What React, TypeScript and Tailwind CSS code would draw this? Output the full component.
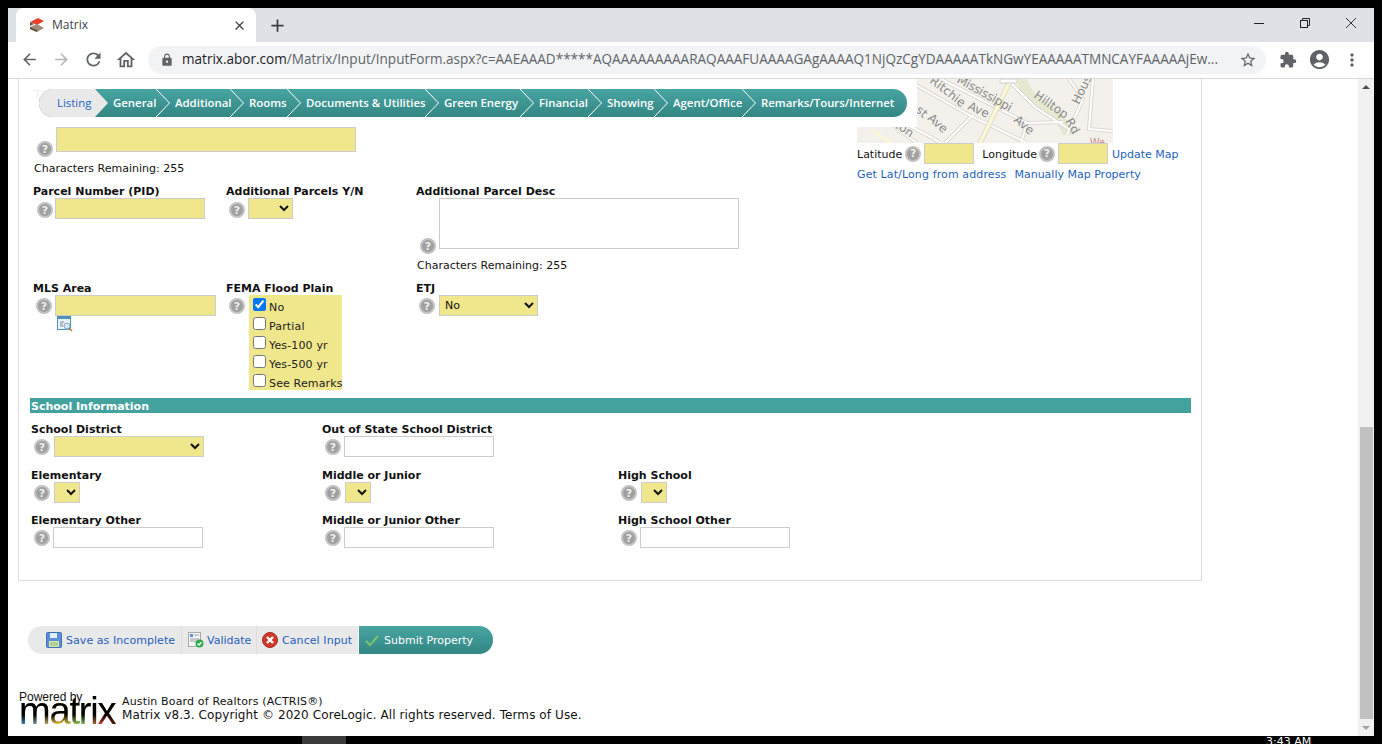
import { MdAdd, MdArrowBack, MdArrowForward, MdClose, MdExtension, MdLock, MdMoreVert, MdOutlineHome, MdRefresh, MdStarBorder, MdAccountCircle } from 'react-icons/md';
import type { ReactNode } from 'react';

const navItems = [
  { label: 'General', width: 'w-[62px]' },
  { label: 'Additional', width: 'w-[74px]' },
  { label: 'Rooms', width: 'w-[57px]' },
  { label: 'Documents & Utilities', width: 'w-[138px]' },
  { label: 'Green Energy', width: 'w-[95px]' },
  { label: 'Financial', width: 'w-[68px]' },
  { label: 'Showing', width: 'w-[66px]' },
  { label: 'Agent/Office', width: 'w-[88px]' },
];

function Help({ className = '' }: { className?: string }) {
  return (
    <span className={`flex size-4 shrink-0 items-center justify-center rounded-full border-2 border-[#c2c2c2] bg-[#a0a0a0] text-[11px] leading-none font-bold text-[#eeeeee] ${className}`}>
      ?
    </span>
  );
}

function Label({ children }: { children: ReactNode }) {
  return <div className="h-[14px] text-[11px] leading-[16px] font-bold whitespace-nowrap text-[#111]">{children}</div>;
}

function YellowSelect({ className, value = '' }: { className: string; value?: string }) {
  return (
    <select defaultValue={value} className={`h-[21px] border border-[#ccc] bg-[#f0e68c] pl-[1px] text-[11px] text-[#111] ${className}`}>
      <option value="">{''}</option>
      <option value="No">No</option>
    </select>
  );
}

function Check({ label, checked = false }: { label: string; checked?: boolean }) {
  return (
    <label className="flex h-[19px] items-center pl-[4px] whitespace-nowrap">
      <input type="checkbox" defaultChecked={checked} className="m-0 size-[13px] -translate-y-[1px] accent-[#0075ff]" />
      <span className="ml-[3px] translate-y-[3px] text-[11px] tracking-[0.15px] text-[#222]">{label}</span>
    </label>
  );
}

function MapTile() {
  return (
    <svg viewBox="0 0 256 64" className="block h-[64px] w-[256px]">
      <rect width="256" height="64" fill="#f4f1ec" />
      <path d="M170 0 C176 14 182 20 196 28 C206 34 214 44 216 56 L206 56 C200 42 190 34 176 28 C166 20 160 10 160 0 Z" fill="#e6e8d2" />
      <g fill="none" stroke="#dcd7d0" strokeWidth="4">
        <path d="M48 0 L116 38 L170 64" />
        <path d="M84 0 L170 44 L206 43" />
        <path d="M150 0 L178 28 L218 54" />
        <path d="M0 20 L70 56 L84 64" />
        <path d="M20 34 L60 64" />
        <path d="M88 64 L116 36" />
        <path d="M212 0 L226 20 L210 56" />
        <path d="M236 0 L232 50 L256 52" />
        <path d="M170 44 L164 64" />
      </g>
      <g fill="none" stroke="#fff" strokeWidth="2">
        <path d="M48 0 L116 38 L170 64" />
        <path d="M84 0 L170 44 L206 43" />
        <path d="M150 0 L178 28 L218 54" />
        <path d="M0 20 L70 56 L84 64" />
        <path d="M20 34 L60 64" />
        <path d="M88 64 L116 36" />
        <path d="M212 0 L226 20 L210 56" />
        <path d="M236 0 L232 50 L256 52" />
        <path d="M170 44 L164 64" />
      </g>
      <path d="M123 64 L153 2" stroke="#d8d3b8" strokeWidth="5" fill="none" />
      <path d="M123 64 L153 2" stroke="#faf8d8" strokeWidth="3.5" fill="none" />
      <path d="M16 52 L34 64" stroke="#faf8d8" strokeWidth="3" fill="none" />
      <rect x="143" y="0" width="17" height="4" rx="1" fill="#fff" stroke="#ccc" />
      <g fill="#8a8a8a" fontFamily="'DejaVu Sans', sans-serif" fontSize="12">
        <text transform="translate(72 3) rotate(38)">Ritchie</text>
        <text transform="translate(110 30) rotate(24)">Ave</text>
        <text transform="translate(99 3) rotate(29)" letterSpacing="-0.3">Mississippi</text>
        <text transform="translate(156 42) rotate(40)">Ave</text>
        <text transform="translate(176 18) rotate(35)">Hilltop</text>
        <text transform="translate(208 42) rotate(60)">Rd</text>
        <text transform="translate(222 26) rotate(-65)">House</text>
        <text transform="translate(58 32) rotate(42)">st</text>
        <text transform="translate(70 40) rotate(42)">Ave</text>
        <text transform="translate(32 44) rotate(35)">ston</text>
      </g>
      <text x="233" y="67" fill="#c98a8a" fontFamily="'Liberation Sans', sans-serif" fontSize="10">We</text>
    </svg>
  );
}

function Toolbar() {
  return (
    <div className="shrink-0 bg-white">
      <div className="flex h-[34px] items-end bg-[#dee1e6] pl-[8px]">
        <div className="flex h-[34px] w-[240px] items-center rounded-t-[8px] bg-white pr-[9px] pl-[13px] text-[12px] text-[#3c4043]">
          <svg viewBox="0 0 16 16" className="size-[16px] shrink-0">
            <path d="M1 5 L9 1 L15 4 L8 8 Z" fill="#e8412c" />
            <path d="M1 5 L5 7 L1 9 Z" fill="#6d5a4b" />
            <path d="M1 10 L8 7 L15 11 L8 15 L1 12 Z" fill="#a08c79" />
            <path d="M1 10 L8 13 L8 15 L1 12 Z" fill="#5c4d42" />
          </svg>
          <span className="ml-[7px] flex-1 font-['Open_Sans',sans-serif]">Matrix</span>
          <MdClose className="size-[15px] text-[#3c4043]" />
        </div>
        <MdAdd className="mb-[6px] ml-[11px] size-[21px] text-[#3c4043]" />
        <div className="ml-auto flex h-full items-start text-[#3c4043]">
          <div className="flex h-[30px] w-[46px] items-center justify-center pt-[1px]">
            <span className="h-[1px] w-[10px] bg-[#222]" />
          </div>
          <div className="flex h-[30px] w-[46px] items-center justify-center">
            <svg viewBox="0 0 10 10" className="size-[10px]" fill="none" stroke="#222">
              <rect x="0.5" y="2.5" width="7" height="7" />
              <path d="M2.5 2.5 V0.5 H9.5 V7.5 H7.5" />
            </svg>
          </div>
          <div className="flex h-[30px] w-[46px] items-center justify-center">
            <svg viewBox="0 0 10 10" className="size-[10px]" stroke="#222" strokeWidth="0.9">
              <path d="M0 0 L10 10 M10 0 L0 10" />
            </svg>
          </div>
        </div>
      </div>
      <div className="flex h-[37px] items-center border-b border-[#d9d9d9] bg-white pb-[1px] text-[#5f6368]">
        <MdArrowBack className="ml-[12px] size-[19px]" />
        <MdArrowForward className="ml-[13px] size-[19px] text-[#b5b7ba]" />
        <MdRefresh className="ml-[12px] size-[21px]" />
        <MdOutlineHome className="ml-[11px] size-[22px]" />
        <div className="ml-[11px] flex h-[28px] w-[1118px] items-center rounded-full bg-[#f1f3f4] pl-[12px] whitespace-nowrap text-[#5f6368]">
          <MdLock className="size-[14px]" />
          <span className="ml-[8px] font-['Open_Sans',sans-serif] text-[13.55px]">
            <span className="text-[#202124]">matrix.abor.com</span>/Matrix/Input/InputForm.aspx?c=AAEAAAD*****AQAAAAAAAAARAQAAAFUAAAAGAgAAAAQ1NjQzCgYDAAAAATkNGwYEAAAAATMNCAYFAAAAAjEw...
          </span>
          <MdStarBorder className="mr-[9px] ml-auto size-[18px]" />
        </div>
        <MdExtension className="ml-[13px] size-[18px]" />
        <MdAccountCircle className="ml-[11px] size-[23px]" />
        <MdMoreVert className="ml-[11px] size-[20px]" />
      </div>
    </div>
  );
}

function StepNav() {
  return (
    <div className="absolute top-0 left-0 z-10 h-[48px] w-[898px] bg-white pt-[10px] pl-[20px]">
      <span className="absolute top-[8px] left-[15px] text-[11px] text-[#eeeeee]">T</span>
      <div className="relative flex h-[28px] w-[868px] overflow-hidden rounded-full bg-linear-to-b from-[#48a5a2] to-[#338684] font-['Open_Sans',sans-serif] text-[11.4px] leading-[28px] font-semibold whitespace-nowrap text-white">
        <span className="h-[28px] w-[69px] shrink-0 bg-[#e9e9e9] pl-[18px] font-normal text-[#1e66c0] [clip-path:polygon(0_0,56px_0,69px_50%,56px_100%,0_100%)]">Listing</span>
        <div className="w-[5px] shrink-0" />
        {navItems.map(item => (
          <div key={item.label} className={`relative h-[28px] shrink-0 ${item.width}`}>
            {item.label}
            <svg viewBox="0 0 14 28" className="absolute top-0 right-[5px] h-[28px] w-[14px]" fill="none" stroke="#fff">
              <path d="M0 0 L13.5 14 L0 28" />
            </svg>
          </div>
        ))}
        <span>Remarks/Tours/Internet</span>
      </div>
    </div>
  );
}

function Panel() {
  return (
    <div className="relative ml-[10px] h-[502px] w-[1184px] border-x border-b border-[#ddd]">
      <StepNav />
      <div className="flex h-[318px]">
        <div className="w-[838px] shrink-0 pt-[48px]">
          <div className="flex pl-[18px]">
            <Help className="mt-[14px]" />
            <div className="ml-[3px] h-[25px] w-[300px] border border-[#ccc] bg-[#f0e68c]" />
          </div>
          <div className="mt-[4px] h-[14px] pl-[15px] leading-[16px]">Characters Remaining: 255</div>
          <div className="mt-[9px] flex pl-[14px]">
            <div className="w-[193px]">
              <Label>Parcel Number (PID)</Label>
              <div className="flex">
                <Help className="mt-[4px] ml-[4px]" />
                <div className="ml-[2px] h-[21px] w-[150px] border border-[#ccc] bg-[#f0e68c]" />
              </div>
            </div>
            <div className="w-[190px]">
              <Label>Additional Parcels Y/N</Label>
              <div className="flex">
                <Help className="mt-[4px] ml-[3px]" />
                <YellowSelect className="ml-[3px] w-[45px]" />
              </div>
            </div>
            <div>
              <Label>Additional Parcel Desc</Label>
              <div className="flex">
                <Help className="mt-[40px] ml-[4px]" />
                <div className="ml-[3px] h-[51px] w-[300px] border border-[#ccc] bg-white" />
              </div>
              <div className="mt-[4px] ml-[1px] h-[14px] leading-[16px]">Characters Remaining: 255</div>
            </div>
          </div>
          <div className="mt-[9px] flex pl-[14px]">
            <div className="w-[193px]">
              <Label>MLS Area</Label>
              <div className="flex">
                <Help className="mt-[3px] ml-[3px]" />
                <div className="ml-[3px]">
                  <div className="h-[21px] w-[161px] border border-[#ccc] bg-[#f0e68c]" />
                  <svg viewBox="0 0 16 16" className="ml-[2px] size-[16px]">
                    <rect x="0.5" y="0.5" width="13" height="13" fill="#eaf3f8" stroke="#4d94b8" />
                    <rect x="1" y="1" width="12" height="2" fill="#4d94b8" />
                    <path d="M3 6 H7 M3 8 H6 M3 10 H6" stroke="#7d8a92" />
                    <circle cx="10" cy="10" r="3" fill="#d5e8f4" stroke="#7fa9c4" />
                    <path d="M12 12 L15 15" stroke="#c47a3a" strokeWidth="1.5" />
                  </svg>
                </div>
              </div>
            </div>
            <div className="w-[190px]">
              <Label>FEMA Flood Plain</Label>
              <div className="flex">
                <Help className="mt-[3px] ml-[3px]" />
                <div className="ml-[4px] h-[95px] w-[93px] bg-[#f0e68c] pt-[1px]">
                  <Check label="No" checked />
                  <Check label="Partial" />
                  <Check label="Yes-100 yr" />
                  <Check label="Yes-500 yr" />
                  <Check label="See Remarks" />
                </div>
              </div>
            </div>
            <div>
              <Label>ETJ</Label>
              <div className="flex">
                <Help className="mt-[3px] ml-[3px]" />
                <YellowSelect className="ml-[4px] w-[99px]" value="No" />
              </div>
            </div>
          </div>
        </div>
        <div>
          <MapTile />
          <div className="flex h-[21px] items-center whitespace-nowrap">
            <span className="mt-[3px]">Latitude</span>
            <Help className="ml-[3px]" />
            <div className="ml-[3px] h-[21px] w-[50px] border border-[#ccc] bg-[#f0e68c]" />
            <span className="mt-[3px] ml-[8px]">Longitude</span>
            <Help className="ml-[2px]" />
            <div className="ml-[3px] h-[21px] w-[50px] border border-[#ccc] bg-[#f0e68c]" />
            <span className="mt-[3px] ml-[4px] text-[#1e5fc0]">Update Map</span>
          </div>
          <div className="mt-[4px] flex h-[14px] leading-[14px] whitespace-nowrap text-[#1e5fc0]">
            <span className="tracking-[0.12px]">Get Lat/Long from address</span>
            <span className="ml-[8px]">Manually Map Property</span>
          </div>
        </div>
      </div>
      <div className="mt-[1px] ml-[11px] h-[15px] w-[1161px] bg-[#43a19e] pl-[1px] text-[11px] leading-[17px] font-bold text-white">School Information</div>
      <div className="mt-[9px] grid grid-cols-[291px_296px_1fr] gap-y-[10px] pl-[12px]">
        <div>
          <Label>School District</Label>
          <div className="flex">
            <Help className="mt-[3px] ml-[3px]" />
            <YellowSelect className="ml-[4px] w-[150px]" />
          </div>
        </div>
        <div>
          <Label>Out of State School District</Label>
          <div className="flex">
            <Help className="mt-[3px] ml-[3px]" />
            <div className="ml-[3px] h-[21px] w-[150px] border border-[#ccc] bg-white" />
          </div>
        </div>
        <div />
        <div className="mt-[1px]">
          <Label>Elementary</Label>
          <div className="flex">
            <Help className="mt-[3px] ml-[3px]" />
            <YellowSelect className="ml-[4px] w-[26px]" />
          </div>
        </div>
        <div className="mt-[1px]">
          <Label>Middle or Junior</Label>
          <div className="flex">
            <Help className="mt-[3px] ml-[3px]" />
            <YellowSelect className="ml-[4px] w-[26px]" />
          </div>
        </div>
        <div className="mt-[1px]">
          <Label>High School</Label>
          <div className="flex">
            <Help className="mt-[3px] ml-[3px]" />
            <YellowSelect className="ml-[4px] w-[26px]" />
          </div>
        </div>
        <div>
          <Label>Elementary Other</Label>
          <div className="flex">
            <Help className="mt-[3px] ml-[3px]" />
            <div className="ml-[3px] h-[21px] w-[150px] border border-[#ccc] bg-white" />
          </div>
        </div>
        <div>
          <Label>Middle or Junior Other</Label>
          <div className="flex">
            <Help className="mt-[3px] ml-[3px]" />
            <div className="ml-[3px] h-[21px] w-[150px] border border-[#ccc] bg-white" />
          </div>
        </div>
        <div>
          <Label>High School Other</Label>
          <div className="flex">
            <Help className="mt-[3px] ml-[3px]" />
            <div className="ml-[3px] h-[21px] w-[150px] border border-[#ccc] bg-white" />
          </div>
        </div>
      </div>
    </div>
  );
}

function ActionBar() {
  return (
    <div className="mt-[45px] ml-[20px] flex h-[28px] w-[465px] overflow-hidden rounded-full bg-[#e9e9e9] whitespace-nowrap text-[#1e5fc0]">
      <div className="flex w-[154px] items-center border-r border-[#dedede] pl-[18px]">
        <svg viewBox="0 0 16 16" className="size-[16px] shrink-0">
          <rect x="0.5" y="0.5" width="15" height="15" rx="1" fill="#5b8fd6" stroke="#3b6fb8" />
          <rect x="4" y="1" width="7" height="5" fill="#e8eef8" />
          <rect x="3" y="9" width="10" height="6" fill="#d6e8b4" />
          <path d="M4 11 H12 M4 13 H12" stroke="#8fb56a" />
        </svg>
        <span className="mt-[2px] ml-[4px] tracking-[0.06px]">Save as Incomplete</span>
      </div>
      <div className="flex w-[75px] items-center border-r border-[#dedede] pl-[6px]">
        <svg viewBox="0 0 16 16" className="size-[16px] shrink-0">
          <rect x="0.5" y="0.5" width="12" height="14" fill="#f6f6f6" stroke="#a8a8a8" />
          <rect x="2" y="2" width="3" height="3" fill="#5b8fd6" />
          <path d="M6 3 H11 M2 7 H11 M2 9 H8" stroke="#9a9a9a" />
          <circle cx="11.5" cy="11.5" r="4" fill="#2fa84f" />
          <path d="M9.5 11.5 L11 13 L13.5 10.2" stroke="#fff" strokeWidth="1.3" fill="none" />
        </svg>
        <span className="mt-[2px] ml-[3px]">Validate</span>
      </div>
      <div className="flex w-[101px] items-center pl-[5px]">
        <svg viewBox="0 0 16 16" className="size-[16px] shrink-0">
          <circle cx="8" cy="8" r="7.5" fill="#cf3a2a" stroke="#a52a1f" />
          <path d="M5 5 L11 11 M11 5 L5 11" stroke="#fff" strokeWidth="2.4" />
        </svg>
        <span className="mt-[2px] ml-[4px] tracking-[0.08px]">Cancel Input</span>
      </div>
      <div className="flex flex-1 items-center border-l border-white bg-linear-to-b from-[#48a5a2] to-[#338684] pl-[6px] text-white">
        <svg viewBox="0 0 14 14" className="size-[14px] shrink-0" fill="none" stroke="#7cc46a" strokeWidth="2">
          <path d="M1 8 L5 12 L13 3" />
        </svg>
        <span className="mt-[2px] ml-[5px]">Submit Property</span>
      </div>
    </div>
  );
}

function Footer() {
  return (
    <div className="mt-[36px] ml-[11px] flex items-end whitespace-nowrap text-[#111]">
      <div className="w-[103px]">
        <div className="h-[14px] font-['Liberation_Sans',sans-serif] text-[12px] leading-[14px]">Powered by</div>
        <div className="-mt-[8px] h-[30px] bg-[linear-gradient(to_bottom,#000_62%,transparent_92%),linear-gradient(to_right,#1b6fb8,#f2b632_40%,#6fb84a_60%,#c0392b_80%,#000)] bg-clip-text font-['Liberation_Sans',sans-serif] text-[38px] leading-[30px] tracking-[-1.2px] text-transparent">
          matrix
        </div>
      </div>
      <div className="pb-[4px]">
        <div className="h-[14px] leading-[16px] tracking-[0.15px]">Austin Board of Realtors (ACTRIS®)</div>
        <div className="h-[14px] text-[12px] leading-[14px] tracking-[0.09px]">Matrix v8.3. Copyright © 2020 CoreLogic. All rights reserved. Terms of Use.</div>
      </div>
    </div>
  );
}

export default function App() {
  return (
    <div className="flex h-[744px] w-[1382px] flex-col overflow-hidden bg-black px-[8px] pt-[8px] font-['DejaVu_Sans',sans-serif] text-[11px] text-[#111]">
      <Toolbar />
      <div className="flex h-[657px] shrink-0 overflow-hidden bg-white">
        <div className="min-w-0 flex-1">
          <Panel />
          <ActionBar />
          <Footer />
        </div>
        <div className="flex w-[16px] shrink-0 flex-col items-center bg-[#f1f1f1]">
          <span className="mt-[6px] h-0 w-0 border-x-[4px] border-b-[4px] border-x-transparent border-b-[#505050]" />
          <div className="mt-auto h-[292px] w-[13px] bg-[#c1c1c1]" />
          <span className="mt-[7px] mb-[6px] h-0 w-0 border-x-[4px] border-t-[4px] border-x-transparent border-t-[#a3a3a3]" />
        </div>
      </div>
      <div className="flex h-[8px] shrink-0">
        <div className="ml-[294px] h-[8px] w-[44px] bg-[#3a3a3a]" />
        <div className="ml-[920px] text-[11px] leading-[12px] text-white">3:43 AM</div>
      </div>
    </div>
  );
}
